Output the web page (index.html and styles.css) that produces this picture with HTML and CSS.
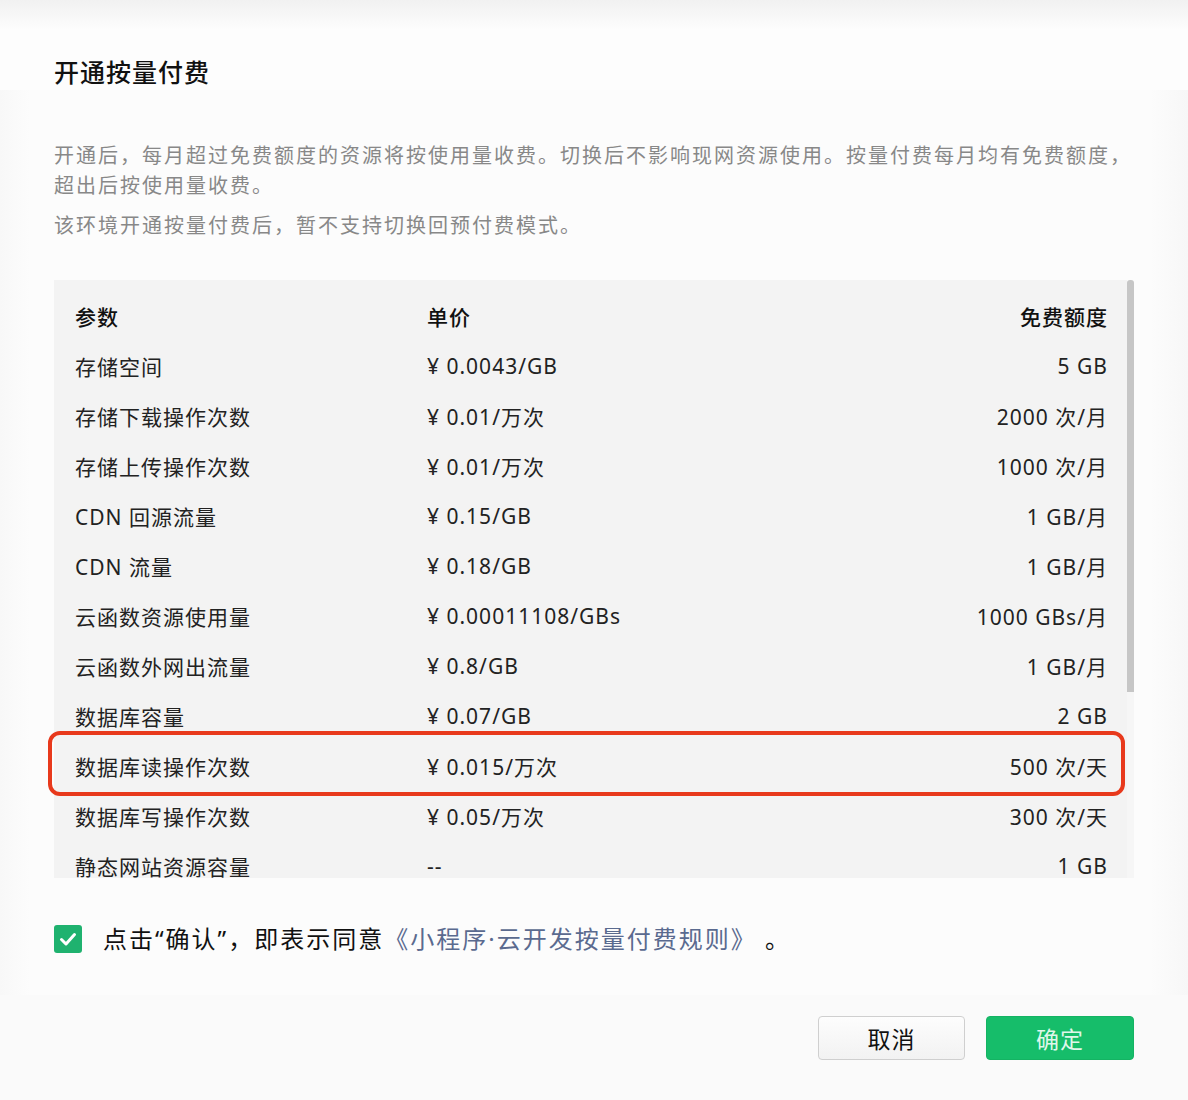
FILE: index.html
```html
<!DOCTYPE html>
<html lang="zh-CN">
<head>
<meta charset="utf-8">
<title>开通按量付费</title>
<link rel="stylesheet" href="styles.css">
</head>
<body>
<div class="dialog">
  <div class="head">
    <h1 class="title">开通按量付费</h1>
  </div>
  <div class="body">
    <p class="desc">开通后，每月超过免费额度的资源将按使用量收费。切换后不影响现网资源使用。按量付费每月均有免费额度，<br>超出后按使用量收费。</p>
    <p class="desc desc-2">该环境开通按量付费后，暂不支持切换回预付费模式。</p>

    <div class="table-outer">
      <div class="table">
        <div class="row row-head"><span>参数</span><span>单价</span><span class="r">免费额度</span></div>
        <div class="row"><span>存储空间</span><span>¥ 0.0043/GB</span><span class="r">5 GB</span></div>
        <div class="row"><span>存储下载操作次数</span><span>¥ 0.01/万次</span><span class="r">2000 次/月</span></div>
        <div class="row"><span>存储上传操作次数</span><span>¥ 0.01/万次</span><span class="r">1000 次/月</span></div>
        <div class="row"><span>CDN 回源流量</span><span>¥ 0.15/GB</span><span class="r">1 GB/月</span></div>
        <div class="row"><span>CDN 流量</span><span>¥ 0.18/GB</span><span class="r">1 GB/月</span></div>
        <div class="row"><span>云函数资源使用量</span><span>¥ 0.00011108/GBs</span><span class="r">1000 GBs/月</span></div>
        <div class="row"><span>云函数外网出流量</span><span>¥ 0.8/GB</span><span class="r">1 GB/月</span></div>
        <div class="row"><span>数据库容量</span><span>¥ 0.07/GB</span><span class="r">2 GB</span></div>
        <div class="row"><span>数据库读操作次数</span><span>¥ 0.015/万次</span><span class="r">500 次/天</span></div>
        <div class="row"><span>数据库写操作次数</span><span>¥ 0.05/万次</span><span class="r">300 次/天</span></div>
        <div class="row"><span>静态网站资源容量</span><span>--</span><span class="r">1 GB</span></div>
      </div>
      <div class="scroll-thumb"></div>
      <div class="highlight"></div>
    </div>

    <div class="agree">
      <span class="check">
        <svg viewBox="0 0 28 28" width="28" height="28"><path d="M7.5 14.5 L12 19 L20.5 9.5" fill="none" stroke="#ffffff" stroke-width="3" stroke-linecap="round" stroke-linejoin="round"/></svg>
      </span>
      <span class="agree-text">点击“确认”，即表示同意<a class="link">《小程序·云开发按量付费规则》</a> 。</span>
    </div>
  </div>
  <div class="foot">
    <button class="btn btn-cancel">取消</button>
    <button class="btn btn-ok">确定</button>
  </div>
</div>
</body>
</html>
```

FILE: styles.css
```css
html, body {
  margin: 0;
  padding: 0;
}
body {
  background: #fcfcfc;
  font-family: "Noto Sans", "Noto Sans CJK SC", sans-serif;
  color: #1f1f1f;
  width: 1188px;
  height: 1100px;
  overflow: hidden;
}
.dialog {
  display: flex;
  flex-direction: column;
  height: 1100px;
  background: linear-gradient(to right, #f8f8f8 0, #fcfcfc 30px, #fcfcfc 1150px, #f7f7f7 1188px);
}
.head {
  padding: 56px 54px 0;
  height: 34px;
  background: linear-gradient(to bottom, #f1f1f1 0, #fdfdfd 30px, #fdfdfd 100%);
}
.title {
  margin: 0;
  font-size: 25px;
  line-height: 32px;
  font-weight: 500;
  letter-spacing: 1px;
  color: #111;
}
.body {
  padding: 51px 54px 0;
}
.desc {
  margin: 0;
  font-size: 20px;
  line-height: 30px;
  color: #888;
  letter-spacing: 2px;
  white-space: nowrap;
}
.desc-2 {
  margin-top: 10px;
  letter-spacing: 2px;
}
.table-outer {
  position: relative;
  margin-top: 39px;
  width: 1080px;
}
.table {
  height: 587px;
  padding-top: 11px;
  overflow: hidden;
  background: #f3f3f3;
  width: 1073px;
}
.row {
  display: grid;
  grid-template-columns: 352px 1fr auto;
  height: 50px;
  align-items: center;
  padding: 0 20px 0 21px;
  font-size: 21px;
  letter-spacing: 1px;
  color: #222;
}
.row-head {
  font-weight: 500;
  color: #111;
}
.r {
  text-align: right;
  margin-right: -1px;
}
.scroll-thumb {
  position: absolute;
  right: 0;
  top: 0;
  width: 7px;
  height: 412px;
  background: #c6c6c6;
  border-radius: 3px 3px 0 0;
}
.table-outer::after {
  content: "";
  position: absolute;
  right: 0;
  top: 412px;
  width: 7px;
  bottom: 0;
  background: #f6f6f6;
}
.highlight {
  position: absolute;
  left: -6px;
  top: 451px;
  width: 1069px;
  height: 57px;
  border: 4px solid #e8391c;
  border-radius: 12px;
  z-index: 2;
}
.agree {
  display: flex;
  align-items: center;
  gap: 21px;
  margin-top: 45px;
  height: 32px;
}
.check {
  width: 28px;
  height: 28px;
  border-radius: 3px;
  background: #1fb26f;
  display: flex;
}
.agree-text {
  font-size: 24px;
  line-height: 32px;
  letter-spacing: 2px;
  color: #111;
  white-space: pre;
}
.link {
  color: #5a6a8f;
}
.foot {
  margin-top: auto;
  height: 84px;
  display: flex;
  justify-content: flex-end;
  align-items: flex-start;
  gap: 21px;
  padding: 21px 54px 0;
  background: #fafafa;
}
.btn {
  width: 148px;
  height: 44px;
  border-radius: 4px;
  font-family: "Noto Sans", "Noto Sans CJK SC", sans-serif;
  font-size: 23px;
  letter-spacing: 1px;
  padding: 0;
  cursor: pointer;
}
.btn-cancel {
  width: 147px;
  background: linear-gradient(to bottom, #fdfdfd, #f2f2f2);
  border: 1px solid #cfcfcf;
  color: #111;
}
.btn-ok {
  background: #16bd6a;
  border: 1px solid #14b363;
  color: #dff7ea;
}
```
